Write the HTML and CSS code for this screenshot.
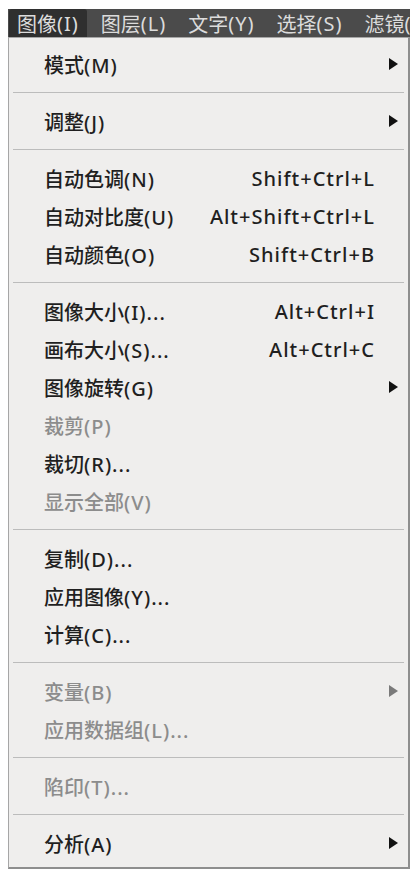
FILE: index.html
```html
<!DOCTYPE html>
<html lang="zh-CN">
<head>
    <meta charset="UTF-8">
    <meta name="viewport" content="width=device-width, initial-scale=1.0">
    <title>图像菜单</title>
    <link rel="stylesheet" href="styles.css">
</head>
<body>

    <div class="menubar">
        <span class="menubar-item active">图像<span class="lat">(I)</span></span>
        <span class="menubar-item">图层<span class="lat">(L)</span></span>
        <span class="menubar-item">文字<span class="lat">(Y)</span></span>
        <span class="menubar-item">选择<span class="lat">(S)</span></span>
        <span class="menubar-item">滤镜<span class="lat">(T)</span></span>
    </div>

    <div class="menu">
        <div class="item"><span class="label">模式<span class="lat">(M)</span></span><span class="arrow"></span></div>
        <div class="sep"></div>
        <div class="item"><span class="label">调整<span class="lat">(J)</span></span><span class="arrow"></span></div>
        <div class="sep"></div>
        <div class="item"><span class="label">自动色调<span class="lat">(N)</span></span><span class="key">Shift+Ctrl+L</span><span class="arrow-space"></span></div>
        <div class="item"><span class="label">自动对比度<span class="lat">(U)</span></span><span class="key">Alt+Shift+Ctrl+L</span><span class="arrow-space"></span></div>
        <div class="item"><span class="label">自动颜色<span class="lat">(O)</span></span><span class="key">Shift+Ctrl+B</span><span class="arrow-space"></span></div>
        <div class="sep"></div>
        <div class="item"><span class="label">图像大小<span class="lat">(I)...</span></span><span class="key">Alt+Ctrl+I</span><span class="arrow-space"></span></div>
        <div class="item"><span class="label">画布大小<span class="lat">(S)...</span></span><span class="key">Alt+Ctrl+C</span><span class="arrow-space"></span></div>
        <div class="item"><span class="label">图像旋转<span class="lat">(G)</span></span><span class="arrow"></span></div>
        <div class="item disabled"><span class="label">裁剪<span class="lat">(P)</span></span></div>
        <div class="item"><span class="label">裁切<span class="lat">(R)...</span></span></div>
        <div class="item disabled"><span class="label">显示全部<span class="lat">(V)</span></span></div>
        <div class="sep"></div>
        <div class="item"><span class="label">复制<span class="lat">(D)...</span></span></div>
        <div class="item"><span class="label">应用图像<span class="lat">(Y)...</span></span></div>
        <div class="item"><span class="label">计算<span class="lat">(C)...</span></span></div>
        <div class="sep"></div>
        <div class="item disabled"><span class="label">变量<span class="lat">(B)</span></span><span class="arrow"></span></div>
        <div class="item disabled"><span class="label">应用数据组<span class="lat">(L)...</span></span></div>
        <div class="sep"></div>
        <div class="item disabled"><span class="label">陷印<span class="lat">(T)...</span></span></div>
        <div class="sep"></div>
        <div class="item"><span class="label">分析<span class="lat">(A)</span></span><span class="arrow"></span></div>
    </div>

</body>
</html>
```

FILE: styles.css
```css
body {
    margin: 9px 8px 8px 8px;
    background-color: #fff;
    font-family: "Noto Sans CJK SC", sans-serif;
}
.lat {
    font-family: "Noto Sans", "Noto Sans CJK SC", sans-serif;
    letter-spacing: 1px;
}

/* top menu bar */
.menubar {
    display: flex;
    width: 404px;
    height: 28px;
    background-color: #4b4b4b;
    color: #dcdcdc;
    font-size: 20px;
    white-space: nowrap;
    overflow: hidden;
}
.menubar-item {
    display: flex;
    align-items: center;
    padding: 0 8px;
    margin-right: 6px;
}
.menubar-item.active {
    margin-left: 1px;
    background-color: #2f2f2f;
    border-radius: 3px 3px 0 0;
}

/* dropdown */
.menu {
    width: 399px;
    padding: 7px 0 5px;
    background-color: #efeeed;
    border: 1px solid #a6a6a6;
    border-right: 2px solid #8e8e8e;
    border-bottom: 2px solid #8e8e8e;
}
.item {
    display: flex;
    align-items: center;
    height: 38px;
    padding-left: 35px;
    color: #1f1f1f;
    font-size: 20px;
    font-weight: 500;
}
.item.disabled {
    color: #8c8c8c;
}
.key {
    margin-left: auto;
    font-family: "Noto Sans", sans-serif;
    letter-spacing: 1px;
}
.arrow-space {
    width: 33px;
}
.arrow {
    margin-left: auto;
    margin-right: 10px;
    width: 0;
    height: 0;
    border-left: 9px solid #111;
    border-top: 6px solid transparent;
    border-bottom: 6px solid transparent;
}
.item.disabled .arrow {
    border-left-color: #7a7a7a;
}
.sep {
    height: 1px;
    margin: 9px 4px;
    background-color: #bcbcbc;
}
```
